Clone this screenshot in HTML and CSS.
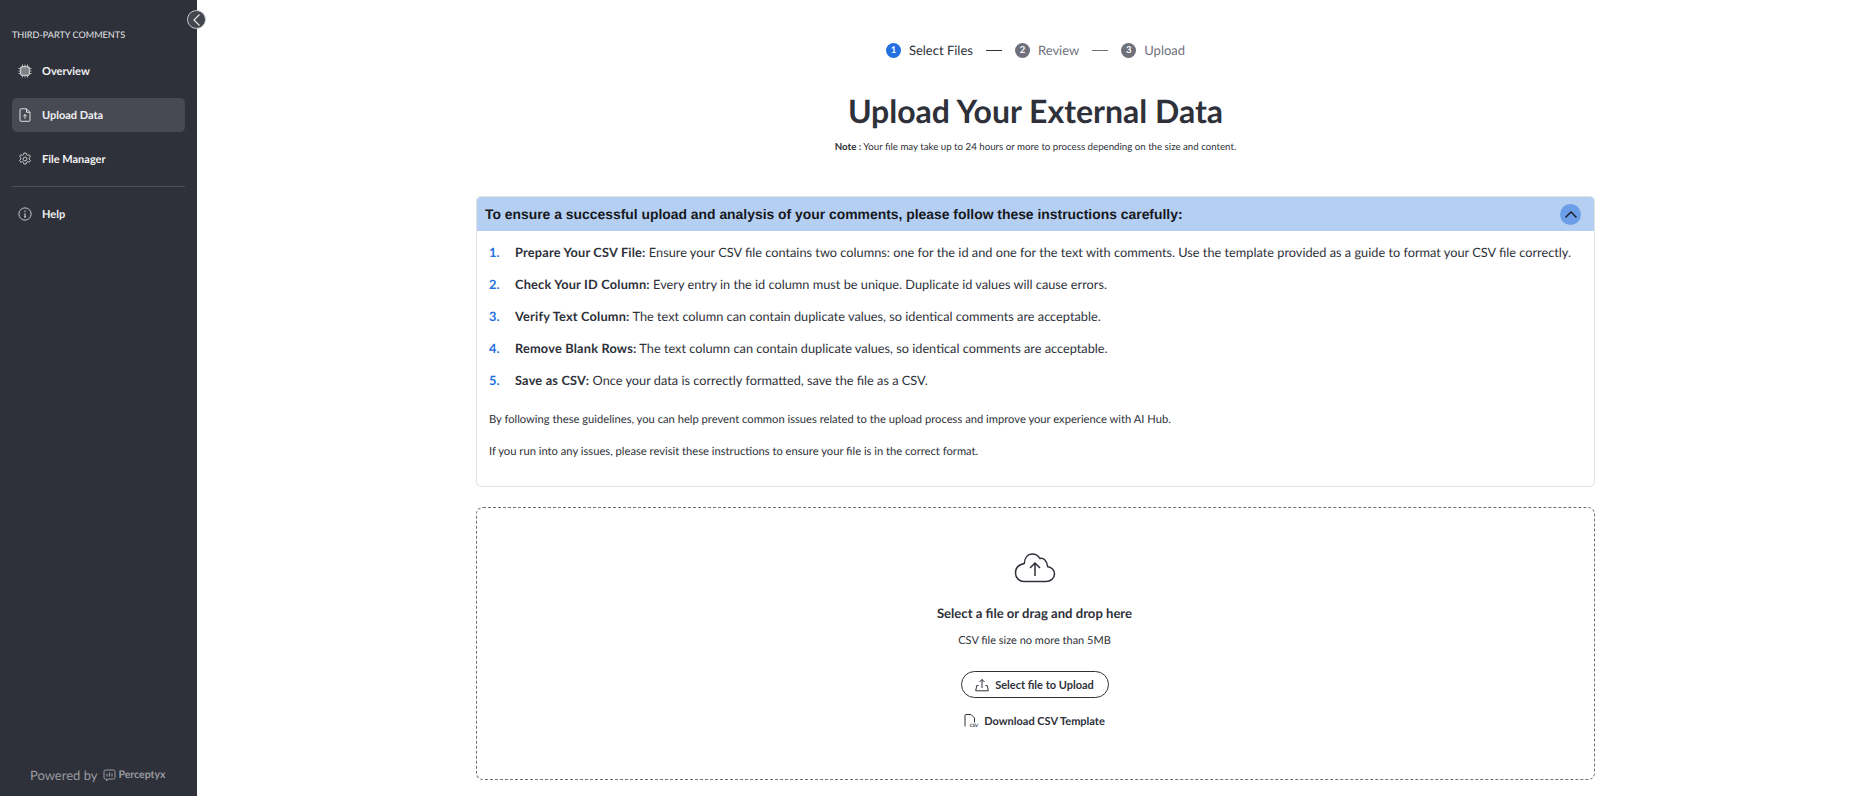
FILE: index.html
```html
<!DOCTYPE html>
<html>
    <head>
        <meta charset="utf-8">
        <title>Upload Data</title>
        <link rel="stylesheet" href="styles.css">
    </head>
    <body>
        <div class="app">
            <aside class="sidebar">
                <button class="collapse">
                    <svg width="12" height="14" viewBox="0 0 12 14"><path d="M8.500 1.500 3 7l5.500 5.500" fill="none" stroke="#e4e4e6" stroke-width="1.200"/></svg>
                </button>
                <div class="side-title">THIRD-PARTY COMMENTS</div>
                <nav class="nav">
                    <a class="nav-item">
                        <svg class="nav-icon" viewBox="0 0 14 14" fill="none" stroke="#c9c9cc"><rect x="2.600" y="2.600" width="8.800" height="8.800" rx="2.200" fill="#e4e4e6" fill-opacity=".45" stroke-width="1.200"/><path d="M4.500 .5v2M7 .5v2M9.500 .5v2M4.500 11.500v2M7 11.500v2M9.500 11.500v2M.5 4.500h2M.5 7h2M.5 9.500h2M11.500 4.500h2M11.500 7h2M11.500 9.500h2" stroke-width=".9"/></svg>
                        Overview
                    </a>
                    <a class="nav-item active">
                        <svg class="nav-icon" viewBox="0 0 14 14" fill="none" stroke="#e2e2e4" stroke-width="1"><path d="M3 .8h5.500L12 4.300v8a1 1 0 0 1-1 1H3a1 1 0 0 1-1-1V1.800a1 1 0 0 1 1-1z"/><path d="M8.500 .8v3.500H12M7 10.800V6.500M5.300 8.200 7 6.500l1.700 1.700"/></svg>
                        Upload Data
                    </a>
                    <a class="nav-item">
                        <svg class="nav-icon" viewBox="0 0 16 16" fill="none" stroke="#d8d8da" stroke-width="1"><path d="M6.700 1.200h2.600l.4 1.900 1.300.7 1.900-.6 1.300 2.200-1.500 1.300v1.500l1.500 1.300-1.300 2.200-1.900-.6-1.300.7-.4 1.900H6.700l-.4-1.900-1.300-.7-1.900.6-1.300-2.200 1.500-1.300V6.700L1.800 5.400l1.300-2.200 1.900.6 1.300-.7z" stroke-linejoin="round"/><circle cx="8" cy="8" r="2.200"/></svg>
                        File Manager
                    </a>
                    <div class="nav-line"></div>
                    <a class="nav-item">
                        <svg class="nav-icon" viewBox="0 0 16 16" fill="none" stroke="#d8d8da" stroke-width="1"><circle cx="8" cy="8" r="7"/><path d="M8 7.200V11.500M6.800 11.500h2.400" stroke-width="1.200"/><circle cx="8" cy="4.900" r=".8" fill="#d8d8da" stroke="none"/></svg>
                        Help
                    </a>
                </nav>
                <div class="powered">
                    <span>Powered by</span>
                    <svg width="13" height="13" viewBox="0 0 13 13" fill="none" stroke="#9a9ba0" stroke-width="1"><path d="M2.500 1h8A1.500 1.500 0 0 1 12 2.500v6A1.500 1.500 0 0 1 10.500 10H5l-1.500 2V10h-1A1.500 1.500 0 0 1 1 8.500v-6A1.500 1.500 0 0 1 2.500 1z"/><path d="M4 7.500V5M6.500 7.500V3.500M9 7.500V4.500" stroke-width="1.100"/></svg>
                    <b>Perceptyx</b>
                </div>
            </aside>
            <main class="main">
                <div class="stepper">
                    <span class="dot current">1</span><span class="step current-label">Select Files</span>
                    <span class="dash dark"></span>
                    <span class="dot">2</span><span class="step">Review</span>
                    <span class="dash"></span>
                    <span class="dot">3</span><span class="step">Upload</span>
                </div>
                <h1>Upload Your External Data</h1>
                <p class="note"><b>Note :</b> Your file may take up to 24 hours or more to process depending on the size and content.</p>

                <section class="card">
                    <div class="card-head">
                        <h2>To ensure a successful upload and analysis of your comments, please follow these instructions carefully:</h2>
                        <button class="toggle">
                            <svg width="14" height="9" viewBox="0 0 14 9"><path d="M1.500 7.500 7 2l5.500 5.500" fill="none" stroke="#16181d" stroke-width="1.300"/></svg>
                        </button>
                    </div>
                    <div class="card-body">
                        <ol class="steps">
                            <li><span class="num">1.</span><span><b>Prepare Your CSV File:</b> Ensure your CSV file contains two columns: one for the id and one for the text with comments. Use the template provided as a guide to format your CSV file correctly.</span></li>
                            <li><span class="num">2.</span><span><b>Check Your ID Column:</b> Every entry in the id column must be unique. Duplicate id values will cause errors.</span></li>
                            <li><span class="num">3.</span><span><b>Verify Text Column:</b> The text column can contain duplicate values, so identical comments are acceptable.</span></li>
                            <li><span class="num">4.</span><span><b>Remove Blank Rows:</b> The text column can contain duplicate values, so identical comments are acceptable.</span></li>
                            <li><span class="num">5.</span><span><b>Save as CSV:</b> Once your data is correctly formatted, save the file as a CSV.</span></li>
                        </ol>
                        <p class="small">By following these guidelines, you can help prevent common issues related to the upload process and improve your experience with AI Hub.</p>
                        <p class="small">If you run into any issues, please revisit these instructions to ensure your file is in the correct format.</p>
                    </div>
                </section>

                <section class="drop">
                    <svg class="cloud" width="42" height="30" viewBox="0 0 42 30" fill="none" stroke="#2e3139" stroke-width="1.500"><path d="M10 28.500h22c4.500 0 8.500-3 8.500-7.500 0-4-3-7-6.800-7.300C33 7 29 4.500 26 5.500 24 2.500 21.500 1 18.500 1 13.500 1 10.500 5 10.300 10.500 5 11.500 1.500 15 1.500 20c0 5 4 8.500 8.500 8.500z" stroke-linejoin="round"/><path d="M21 23V10.500M16 15l5-5 5 5"/></svg>
                    <div class="drop-title">Select a file or drag and drop here</div>
                    <div class="drop-size">CSV file size no more than 5MB</div>
                    <button class="select-btn">
                        <svg width="14" height="14" viewBox="0 0 14 14" fill="none" stroke="#2e3139" stroke-width="1"><path d="M3.500 7.500H1.800L.7 12.800h12.600l-1.100-5.300h-1.700M7 10V1.500M4.500 4 7 1.500 9.500 4"/></svg>
                        Select file to Upload
                    </button>
                    <a class="template">
                        <span class="csv-icon">
                            <svg width="12" height="13" viewBox="0 0 12 13" fill="none" stroke="#2e3139" stroke-width="1"><path d="M1 12.500V1.500a1 1 0 0 1 1-1h5L10.500 4v4.500"/></svg>
                            <span class="csv-tag">CSV</span>
                        </span>
                        Download CSV Template
                    </a>
                </section>
            </main>
        </div>
    </body>
</html>
```

FILE: styles.css
```css
html, body{
    margin: 0;
    height: 100%;
    background-color: white;
    color: #2e3139;
    font-family: "Lato", "Open Sans", sans-serif;
    text-rendering: geometricPrecision;
}
b{
    font-weight: 700;
}
.app{
    display: flex;
    height: 796px;
    overflow: hidden;
}
.sidebar{
    position: relative;
    box-sizing: border-box;
    width: 197px;
    flex-shrink: 0;
    display: flex;
    flex-direction: column;
    padding: 28px 12px 12px 12px;
    background-color: #2e3139;
    color: #f1f1f2;
}
.collapse{
    position: absolute;
    top: 10px;
    right: -9px;
    width: 19px;
    height: 19px;
    padding: 0;
    display: flex;
    align-items: center;
    justify-content: center;
    border: 1px solid #c9c9cc;
    border-radius: 50%;
    background-color: #43464e;
}
.side-title{
    font-size: 9.100px;
    line-height: 13px;
    color: #e4e4e6;
}
.nav{
    margin-top: 13px;
    display: flex;
    flex-direction: column;
    gap: 10px;
}
.nav-item{
    display: flex;
    align-items: center;
    gap: 10px;
    height: 34px;
    padding-left: 6px;
    border-radius: 5px;
    font-size: 11px;
    font-weight: 700;
    color: #f1f1f2;
}
.nav-item.active{
    background-color: #484a53;
}
.nav-icon{
    width: 14px;
    height: 14px;
    flex-shrink: 0;
}
.nav-line{
    height: 1px;
    background-color: #4c4f57;
}
.powered{
    margin-top: auto;
    margin-left: 18px;
    margin-bottom: 1px;
    display: flex;
    align-items: center;
    font-size: 13px;
    color: #9a9ba0;
}
.powered svg{
    margin-left: 6px;
    margin-right: 2px;
}
.powered b{
    font-size: 10.500px;
}
.main{
    flex: 1;
    display: flex;
    flex-direction: column;
    align-items: center;
    padding: 42px 0 0 6px;
}
.stepper{
    display: flex;
    align-items: center;
    height: 16px;
    font-size: 13px;
    color: #6f707c;
}
.dot{
    width: 15px;
    height: 15px;
    border-radius: 50%;
    display: flex;
    align-items: center;
    justify-content: center;
    margin-right: 8px;
    font-size: 9.500px;
    font-weight: 700;
    color: white;
    background-color: #6f707c;
}
.dot.current{
    background-color: #2470e0;
}
.current-label{
    color: #2e3139;
}
.dash{
    width: 16px;
    height: 1px;
    margin: 0 13px;
    background-color: #6f707c;
}
.dash.dark{
    background-color: #2e3139;
}
h1{
    margin: 33px 0 0 0;
    font-size: 32px;
    line-height: 40px;
    font-weight: 700;
}
.note{
    margin: 10px 0 0 0;
    font-size: 9.700px;
    line-height: 12px;
}
.card{
    box-sizing: border-box;
    width: 1119px;
    height: 291px;
    margin-top: 43px;
    border: 1px solid #e1e2e4;
    border-radius: 5px;
    overflow: hidden;
}
.card-head{
    display: flex;
    align-items: center;
    justify-content: space-between;
    height: 34px;
    padding: 0 13px 0 8px;
    background-color: #b5cff3;
}
h2{
    margin: 0;
    font-family: "Liberation Sans", Arial, sans-serif;
    font-size: 13.900px;
    font-weight: 700;
    color: #16181d;
}
.toggle{
    width: 21px;
    height: 21px;
    padding: 0;
    display: flex;
    align-items: center;
    justify-content: center;
    border: 0;
    border-radius: 50%;
    background-color: #6c9ee8;
}
.card-body{
    padding: 5px 12px 0 12px;
}
.steps{
    list-style: none;
    margin: 0;
    padding: 0;
}
.steps li{
    display: flex;
    height: 32px;
    align-items: center;
    font-size: 12.750px;
}
.steps b{
    letter-spacing: .2px;
}
.num{
    width: 26px;
    flex-shrink: 0;
    font-weight: 700;
    color: #2470e0;
}
.small{
    margin: 0;
    font-size: 11.200px;
    line-height: 32px;
}
.steps + .small{
    margin-top: 8px;
}
.drop{
    box-sizing: border-box;
    width: 1119px;
    height: 273px;
    margin-top: 20px;
    display: flex;
    flex-direction: column;
    align-items: center;
    padding: 45px 2px 0 0;
    border: 1px dashed #6f707c;
    border-radius: 7px;
}
.drop-title{
    margin-top: 21px;
    font-size: 13.100px;
    line-height: 18px;
    font-weight: 700;
}
.drop-size{
    margin-top: 12px;
    font-size: 11px;
    line-height: 14px;
}
.select-btn{
    margin-top: 23px;
    width: 148px;
    height: 27px;
    display: flex;
    align-items: center;
    justify-content: center;
    gap: 6px;
    padding: 0;
    background-color: white;
    border: 1px solid #2e3139;
    border-radius: 14px;
    font-family: inherit;
    font-size: 11px;
    font-weight: 700;
    color: #2e3139;
}
.template{
    margin-top: 16px;
    display: flex;
    align-items: center;
    gap: 6px;
    font-size: 11px;
    font-weight: 700;
}
.csv-icon{
    position: relative;
    display: flex;
    width: 14px;
    height: 14px;
}
.csv-tag{
    position: absolute;
    right: 0;
    bottom: 0;
    font-size: 4.500px;
    line-height: 5px;
    background-color: white;
}
```
